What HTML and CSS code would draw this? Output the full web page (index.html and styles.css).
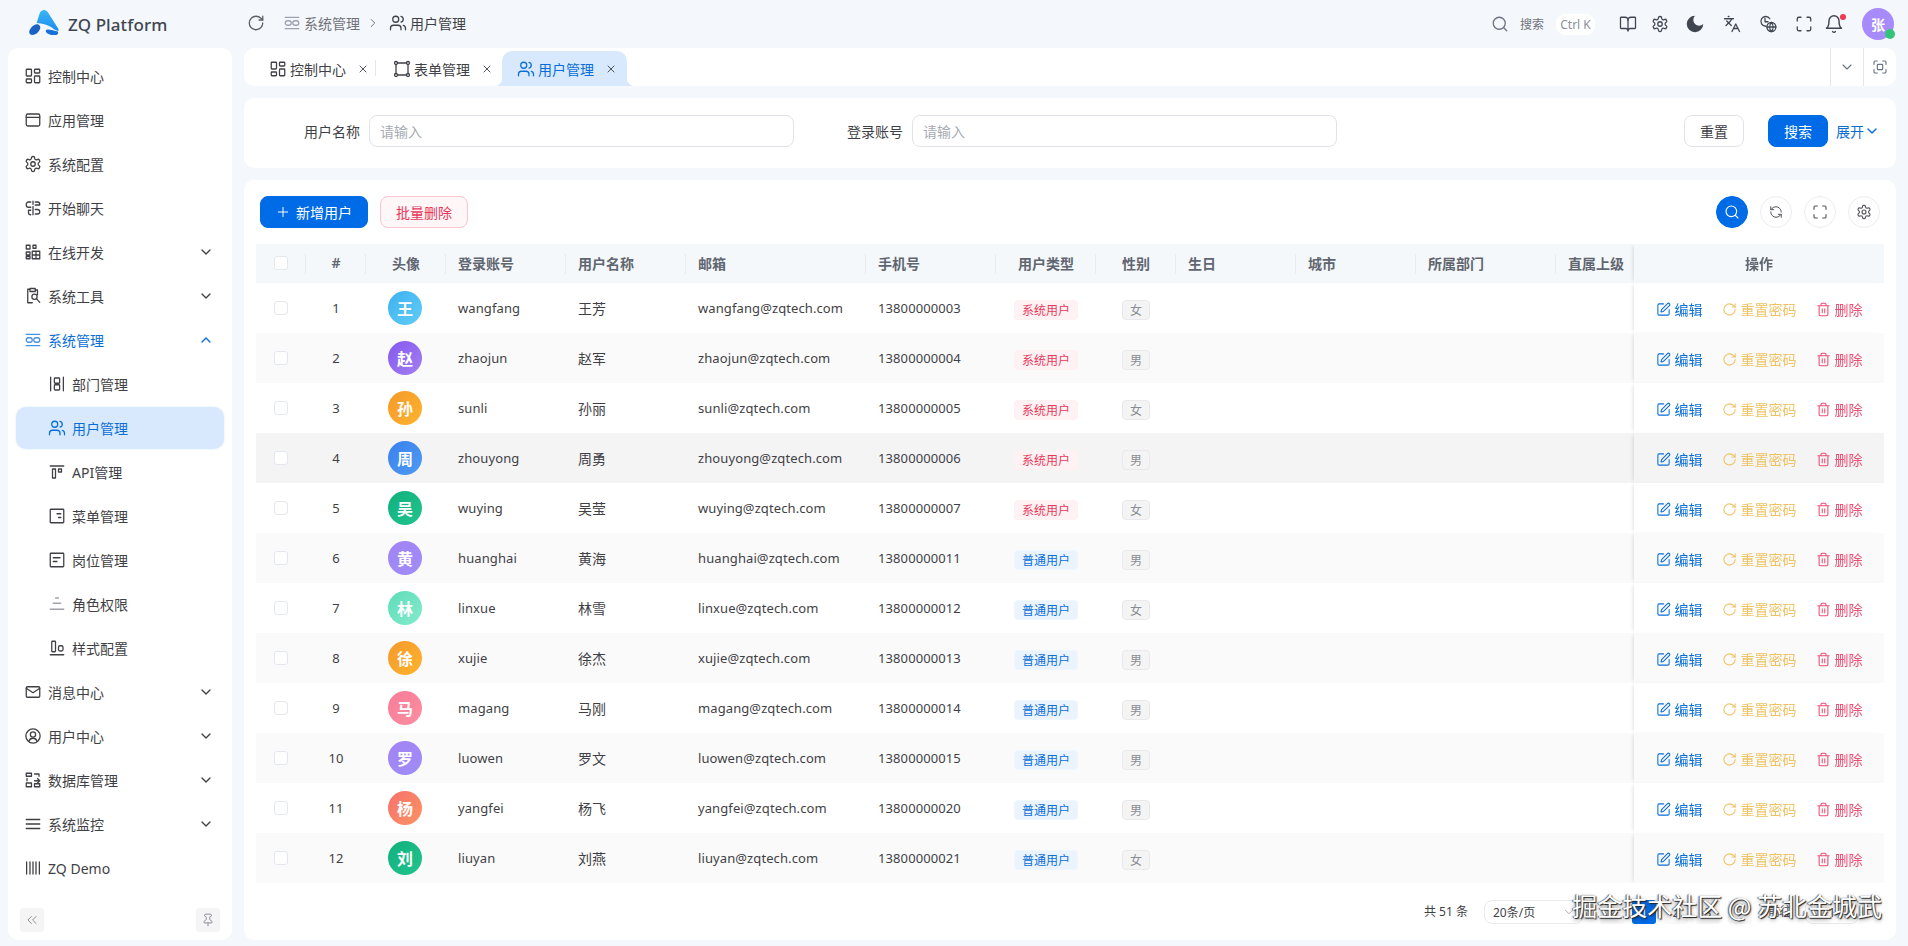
FILE: index.html
```html
<!DOCTYPE html>
<html lang="zh-CN">
<head>
<meta charset="utf-8">
<title>ZQ Platform</title>
<link rel="stylesheet" href="styles.css">
</head>
<body>
<svg class="sprite" xmlns="http://www.w3.org/2000/svg">
<symbol id="i-grid" viewBox="0 0 24 24"><rect x="3" y="3" width="7" height="9" rx="1"/><rect x="14" y="3" width="7" height="5" rx="1"/><rect x="14" y="12" width="7" height="9" rx="1"/><rect x="3" y="16" width="7" height="5" rx="1"/></symbol>
<symbol id="i-app" viewBox="0 0 24 24"><rect x="3" y="4" width="18" height="16" rx="2"/><path d="M3 8.5h18"/></symbol>
<symbol id="i-gear" viewBox="0 0 24 24"><path d="M12.22 2h-.44a2 2 0 0 0-2 2v.18a2 2 0 0 1-1 1.73l-.43.25a2 2 0 0 1-2 0l-.15-.08a2 2 0 0 0-2.73.73l-.22.38a2 2 0 0 0 .73 2.73l.15.1a2 2 0 0 1 1 1.72v.51a2 2 0 0 1-1 1.74l-.15.09a2 2 0 0 0-.73 2.73l.22.38a2 2 0 0 0 2.73.73l.15-.08a2 2 0 0 1 2 0l.43.25a2 2 0 0 1 1 1.73V20a2 2 0 0 0 2 2h.44a2 2 0 0 0 2-2v-.18a2 2 0 0 1 1-1.73l.43-.25a2 2 0 0 1 2 0l.15.08a2 2 0 0 0 2.73-.73l.22-.39a2 2 0 0 0-.73-2.73l-.15-.08a2 2 0 0 1-1-1.74v-.5a2 2 0 0 1 1-1.74l.15-.09a2 2 0 0 0 .73-2.73l-.22-.38a2 2 0 0 0-2.73-.73l-.15.08a2 2 0 0 1-2 0l-.43-.25a2 2 0 0 1-1-1.73V4a2 2 0 0 0-2-2z"/><circle cx="12" cy="12" r="3"/></symbol>
<symbol id="i-chat" viewBox="0 0 24 24"><path d="M12 3v4M12 10v11M9 4H6a3 3 0 0 0-3 3v1a3 3 0 0 0 3 3h3M9 15H6v3a3 3 0 0 0 3 3M15 4h3a3 3 0 0 1 3 3v1h-6M15 14h3a3 3 0 0 1 3 3 3 3 0 0 1-3 3h-3"/></symbol>
<symbol id="i-dev" viewBox="0 0 24 24"><path d="M3 3h5v5H3zM12 3h4v4h-4zM3 12h5v4H3zM3 18h5v3H3zM11 11h10v10H11zM16 11v10M11 16h10"/></symbol>
<symbol id="i-tool" viewBox="0 0 24 24"><path d="M8 3H5v18h6M8 2h7v4H8zM15 4h3v6"/><circle cx="14" cy="13" r="3.5"/><path d="M16.5 15.5 21 20.5"/></symbol>
<symbol id="i-sys" viewBox="0 0 24 24"><path d="M3 4.5h18M3 19.5h18"/><rect x="3" y="9" width="8" height="6" rx="3"/><rect x="13" y="9" width="8" height="6" rx="3"/></symbol>
<symbol id="i-dept" viewBox="0 0 24 24"><path d="M3.5 3v18M20.500 3v18"/><rect x="8.500" y="4" width="7" height="7" rx="1"/><rect x="8.500" y="13" width="7" height="7" rx="1"/></symbol>
<symbol id="i-users" viewBox="0 0 24 24"><path d="M16 21v-2a4 4 0 0 0-4-4H6a4 4 0 0 0-4 4v2"/><circle cx="9" cy="7" r="4"/><path d="M22 21v-2a4 4 0 0 0-3-3.870"/><path d="M16 3.130a4 4 0 0 1 0 7.750"/></symbol>
<symbol id="i-api" viewBox="0 0 24 24"><path d="M3 4h18"/><rect x="6" y="8" width="4" height="12"/><rect x="14" y="8" width="4" height="4"/></symbol>
<symbol id="i-menu" viewBox="0 0 24 24"><rect x="3" y="3" width="18" height="18" rx="1"/><path d="M12 9h5M14 14h3"/></symbol>
<symbol id="i-post" viewBox="0 0 24 24"><rect x="3" y="3" width="18" height="18" rx="1"/><path d="M7 9h9M7 14h5"/></symbol>
<symbol id="i-role" viewBox="0 0 24 24"><path d="M10 4h4M7 11h10M3 19h18"/></symbol>
<symbol id="i-style" viewBox="0 0 24 24"><path d="M3 21h18"/><rect x="5" y="3" width="5" height="14" rx="1"/><rect x="14" y="9" width="6" height="7" rx="2"/></symbol>
<symbol id="i-mail" viewBox="0 0 24 24"><rect x="3" y="5" width="18" height="14" rx="1.500"/><path d="m3 7 9 6 9-6"/></symbol>
<symbol id="i-ucirc" viewBox="0 0 24 24"><circle cx="12" cy="12" r="9.500"/><circle cx="12" cy="10" r="3.500"/><path d="M6.500 19c1-3 3-4 5.500-4s4.500 1 5.500 4"/></symbol>
<symbol id="i-db" viewBox="0 0 24 24"><path d="M3 3h7v4H3zM4 10v3M3 16h7v5H3zM14 4h6M20 4v3M14 13h7M18 10l3 3-3 3M14 17h7v4h-7z"/></symbol>
<symbol id="i-list" viewBox="0 0 24 24"><path d="M3 6h18M3 12h18M3 18h18"/></symbol>
<symbol id="i-bars" viewBox="0 0 24 24"><path d="M3.500 4v16M8 4v16M12 4v16M16 4v16M20.500 4v16"/></symbol>
<symbol id="i-down" viewBox="0 0 24 24"><path d="m6 9 6 6 6-6"/></symbol>
<symbol id="i-up" viewBox="0 0 24 24"><path d="m6 15 6-6 6 6"/></symbol>
<symbol id="i-right" viewBox="0 0 24 24"><path d="m9 6 6 6-6 6"/></symbol>
<symbol id="i-left" viewBox="0 0 24 24"><path d="m15 6-6 6 6 6"/></symbol>
<symbol id="i-dleft" viewBox="0 0 24 24"><path d="m11 6-6 6 6 6M19 6l-6 6 6 6"/></symbol>
<symbol id="i-pin" viewBox="0 0 24 24"><path d="M12 17v5"/><path d="M9 10.760a2 2 0 0 1-1.110 1.790l-1.780.9A2 2 0 0 0 5 15.240V16a1 1 0 0 0 1 1h12a1 1 0 0 0 1-1v-.76a2 2 0 0 0-1.110-1.790l-1.780-.9A2 2 0 0 1 15 10.760V7a1 1 0 0 1 1-1 2 2 0 0 0 0-4H8a2 2 0 0 0 0 4 1 1 0 0 1 1 1z"/></symbol>
<symbol id="i-rcw" viewBox="0 0 24 24"><path d="M21 12a9 9 0 1 1-9-9c2.520 0 4.930 1 6.740 2.740L21 8"/><path d="M21 3v5h-5"/></symbol>
<symbol id="i-form" viewBox="0 0 24 24"><path d="M6 4h12M6 20h12M4 6v12M20 6v12"/><circle cx="4" cy="4" r="2"/><circle cx="20" cy="4" r="2"/><circle cx="4" cy="20" r="2"/><circle cx="20" cy="20" r="2"/></symbol>
<symbol id="i-x" viewBox="0 0 24 24"><path d="M18 6 6 18M6 6l12 12"/></symbol>
<symbol id="i-plus" viewBox="0 0 24 24"><path d="M12 4v16M4 12h16"/></symbol>
<symbol id="i-search" viewBox="0 0 24 24"><circle cx="11" cy="11" r="8"/><path d="m21 21-4.300-4.300"/></symbol>
<symbol id="i-book" viewBox="0 0 24 24"><path d="M12 7v14"/><path d="M3 18a1 1 0 0 1-1-1V4a1 1 0 0 1 1-1h5a4 4 0 0 1 4 4 4 4 0 0 1 4-4h5a1 1 0 0 1 1 1v13a1 1 0 0 1-1 1h-6a3 3 0 0 0-3 3 3 3 0 0 0-3-3z"/></symbol>
<symbol id="i-lang" viewBox="0 0 24 24"><path d="m5 8 6 6M4 14l6-6 2-3M2 5h12M7 2h1M22 22l-5-10-5 10M14 18h6"/></symbol>
<symbol id="i-clockglobe" viewBox="0 0 24 24"><path d="M9 15a6.500 6.500 0 1 1 5.500-10M8 4.500V9h4"/><circle cx="16.500" cy="16" r="6"/><path d="M10.500 16h12M16.500 10c-3 3.500-3 8.500 0 12M16.500 10c3 3.500 3 8.500 0 12"/></symbol>
<symbol id="i-full" viewBox="0 0 24 24"><path d="M3 8V5a2 2 0 0 1 2-2h3M16 3h3a2 2 0 0 1 2 2v3M21 16v3a2 2 0 0 1-2 2h-3M8 21H5a2 2 0 0 1-2-2v-3"/></symbol>
<symbol id="i-bell" viewBox="0 0 24 24"><path d="M6 8a6 6 0 0 1 12 0c0 7 3 9 3 9H3s3-2 3-9"/><path d="M10.300 21a1.940 1.940 0 0 0 3.400 0"/></symbol>
<symbol id="i-scan" viewBox="0 0 24 24"><path d="M3 8V5a2 2 0 0 1 2-2h3M16 3h3a2 2 0 0 1 2 2v3M21 16v3a2 2 0 0 1-2 2h-3M8 21H5a2 2 0 0 1-2-2v-3"/><rect x="8" y="8" width="8" height="8" rx="1"/></symbol>
<symbol id="i-rccw" viewBox="0 0 24 24"><path d="M21 12a9 9 0 0 0-9-9 9.750 9.750 0 0 0-6.740 2.740L3 8"/><path d="M3 3v5h5"/><path d="M3 12a9 9 0 0 0 9 9 9.750 9.750 0 0 0 6.740-2.740L21 16"/><path d="M16 16h5v5"/></symbol>
<symbol id="i-edit" viewBox="0 0 24 24"><path d="M12 3H5a2 2 0 0 0-2 2v14a2 2 0 0 0 2 2h14a2 2 0 0 0 2-2v-7"/><path d="M18.375 2.625a1 1 0 0 1 3 3l-9.013 9.014a2 2 0 0 1-.853.505l-2.873.84a.5.5 0 0 1-.62-.62l.84-2.873a2 2 0 0 1 .506-.852z"/></symbol>
<symbol id="i-trash" viewBox="0 0 24 24"><path d="M3 6h18M19 6v14c0 1-1 2-2 2H7c-1 0-2-1-2-2V6M8 6V4c0-1 1-2 2-2h4c1 0 2 1 2 2v2M10 11v6M14 11v6"/></symbol>
</svg>

<div class="app">
  <header class="topbar">
    <div class="brand">
      <svg class="logo" viewBox="0 0 30 25" aria-hidden="true">
        <defs><linearGradient id="lg" x1="0" y1="0" x2="0" y2="1"><stop offset="0" stop-color="#3ab6f6"/><stop offset="1" stop-color="#1b8df0"/></linearGradient></defs>
        <path fill="url(#lg)" d="M15 0c1.800 0 3 1 4 2.600l10 15.700c.6 1 .8 2 .4 2.700-3.500-.4-5.600-2.800-8.300-4.400-3.500-2-7.500-3-13.500-3.500L11 2.600C12 1 13.200 0 15 0z"/>
        <path fill="#1a63c4" d="M1.600 18.400c1.800-2.800 5.600-5 7.600-4 2.300 1.200 2.800 3.500 1.200 5.900-1.800 2.800-4.100 4.700-6.900 4.700-3 0-4.600-2.800-1.900-6.600z"/>
        <path fill="#1773db" d="M17.500 19.800c2.200-.8 6 .6 10.500 1.500 1.800.4 1.500 3.200-.8 3.700-3 .5-5.500.2-7.600-.9-2.100-1.200-4-3.300-2.100-4.300z"/>
      </svg>
      <span class="brand-name">ZQ Platform</span>
    </div>
    <div class="crumbs">
      <svg class="ic refresh"><use href="#i-rcw"/></svg>
      <span class="crumb muted"><svg class="ic"><use href="#i-sys"/></svg>系统管理</span>
      <svg class="ic crumb-sep"><use href="#i-right"/></svg>
      <span class="crumb"><svg class="ic"><use href="#i-users"/></svg>用户管理</span>
    </div>
    <div class="tools">
      <div class="quick">
        <svg class="ic"><use href="#i-search"/></svg>
        <span class="quick-text">搜索</span>
        <span class="kbd">Ctrl K</span>
      </div>
      <span class="tool w32"><svg class="ic"><use href="#i-book"/></svg></span>
      <span class="tool w32"><svg class="ic"><use href="#i-gear"/></svg></span>
      <span class="tool w38"><svg class="moon" viewBox="0 0 24 24"><path d="M12 3a6 6 0 0 0 9 9 9 9 0 1 1-9-9Z"/></svg></span>
      <span class="tool w36"><svg class="ic"><use href="#i-lang"/></svg></span>
      <span class="tool w36"><svg class="ic"><use href="#i-clockglobe"/></svg></span>
      <span class="tool w36"><svg class="ic"><use href="#i-full"/></svg></span>
      <span class="tool w24 bell"><svg class="ic"><use href="#i-bell"/></svg><i class="bell-dot"></i></span>
      <span class="me">张<i class="me-dot"></i></span>
    </div>
  </header>

  <div class="body">
    <aside class="side">
      <nav class="nav">
        <a class="item"><svg class="ic"><use href="#i-grid"/></svg><span>控制中心</span></a>
        <a class="item"><svg class="ic"><use href="#i-app"/></svg><span>应用管理</span></a>
        <a class="item"><svg class="ic"><use href="#i-gear"/></svg><span>系统配置</span></a>
        <a class="item"><svg class="ic"><use href="#i-chat"/></svg><span>开始聊天</span></a>
        <a class="item"><svg class="ic"><use href="#i-dev"/></svg><span>在线开发</span><svg class="ic chev"><use href="#i-down"/></svg></a>
        <a class="item"><svg class="ic"><use href="#i-tool"/></svg><span>系统工具</span><svg class="ic chev"><use href="#i-down"/></svg></a>
        <a class="item open"><svg class="ic"><use href="#i-sys"/></svg><span>系统管理</span><svg class="ic chev"><use href="#i-up"/></svg></a>
        <a class="item sub"><svg class="ic"><use href="#i-dept"/></svg><span>部门管理</span></a>
        <a class="item sub active"><svg class="ic"><use href="#i-users"/></svg><span>用户管理</span></a>
        <a class="item sub"><svg class="ic"><use href="#i-api"/></svg><span>API管理</span></a>
        <a class="item sub"><svg class="ic"><use href="#i-menu"/></svg><span>菜单管理</span></a>
        <a class="item sub"><svg class="ic"><use href="#i-post"/></svg><span>岗位管理</span></a>
        <a class="item sub"><svg class="ic faint"><use href="#i-role"/></svg><span>角色权限</span></a>
        <a class="item sub"><svg class="ic"><use href="#i-style"/></svg><span>样式配置</span></a>
        <a class="item"><svg class="ic"><use href="#i-mail"/></svg><span>消息中心</span><svg class="ic chev"><use href="#i-down"/></svg></a>
        <a class="item"><svg class="ic"><use href="#i-ucirc"/></svg><span>用户中心</span><svg class="ic chev"><use href="#i-down"/></svg></a>
        <a class="item"><svg class="ic"><use href="#i-db"/></svg><span>数据库管理</span><svg class="ic chev"><use href="#i-down"/></svg></a>
        <a class="item"><svg class="ic"><use href="#i-list"/></svg><span>系统监控</span><svg class="ic chev"><use href="#i-down"/></svg></a>
        <a class="item"><svg class="ic"><use href="#i-bars"/></svg><span>ZQ Demo</span></a>
      </nav>
      <div class="side-foot">
        <span class="foot-btn"><svg class="ic"><use href="#i-dleft"/></svg></span>
        <span class="foot-btn"><svg class="ic"><use href="#i-pin"/></svg></span>
      </div>
    </aside>

    <main class="main">
      <div class="tabs">
        <div class="tab-list">
          <a class="tab sep"><svg class="ic"><use href="#i-grid"/></svg><span>控制中心</span><svg class="ic close"><use href="#i-x"/></svg></a>
          <a class="tab"><svg class="ic"><use href="#i-form"/></svg><span>表单管理</span><svg class="ic close"><use href="#i-x"/></svg></a>
          <a class="tab current"><svg class="ic"><use href="#i-users"/></svg><span>用户管理</span><svg class="ic close"><use href="#i-x"/></svg></a>
        </div>
        <span class="tab-tool"><svg class="ic"><use href="#i-down"/></svg></span>
        <span class="tab-tool"><svg class="ic"><use href="#i-scan"/></svg></span>
      </div>

      <section class="card filter">
        <label class="field"><span class="field-label">用户名称</span><input class="input" placeholder="请输入"></label>
        <label class="field"><span class="field-label">登录账号</span><input class="input" placeholder="请输入"></label>
        <div class="filter-actions">
          <button class="btn plain">重置</button>
          <button class="btn primary wide">搜索</button>
          <a class="expand">展开<svg class="ic"><use href="#i-down"/></svg></a>
        </div>
      </section>

      <section class="card grid-card">
        <div class="toolbar">
          <button class="btn primary add"><svg class="ic"><use href="#i-plus"/></svg>新增用户</button>
          <button class="btn danger">批量删除</button>
          <div class="round-tools">
            <span class="round on"><svg class="ic"><use href="#i-search"/></svg></span>
            <span class="round"><svg class="ic small"><use href="#i-rccw"/></svg></span>
            <span class="round"><svg class="ic"><use href="#i-full"/></svg></span>
            <span class="round"><svg class="ic"><use href="#i-gear"/></svg></span>
          </div>
        </div>

        <div class="table-wrap">
          <table class="table">
            <colgroup>
              <col class="c50"><col class="c60"><col class="c80"><col class="c120"><col class="c120"><col class="c180"><col class="c130"><col class="c100"><col class="c80"><col class="c120"><col class="c120"><col class="c140"><col class="c120"><col class="c250">
            </colgroup>
            <thead>
              <tr>
                <th class="mid"><i class="check"></i></th><th class="mid">#</th><th class="mid">头像</th><th>登录账号</th><th>用户名称</th><th>邮箱</th><th>手机号</th><th class="mid">用户类型</th><th class="mid">性别</th><th>生日</th><th>城市</th><th>所属部门</th><th>直属上级</th><th class="mid op">操作</th>
              </tr>
            </thead>
            <tbody>
              <tr><td class="mid"><i class="check"></i></td><td class="mid">1</td><td class="mid"><span class="ava a-sky">王</span></td><td>wangfang</td><td>王芳</td><td>wangfang@zqtech.com</td><td>13800000003</td><td class="mid"><span class="tag sys">系统用户</span></td><td class="mid"><span class="tag sex">女</span></td><td></td><td></td><td></td><td></td><td class="op"><div class="acts"><a class="act edit"><svg class="ic"><use href="#i-edit"/></svg>编辑</a><a class="act reset"><svg class="ic"><use href="#i-rcw"/></svg>重置密码</a><a class="act del"><svg class="ic"><use href="#i-trash"/></svg>删除</a></div></td></tr>
              <tr><td class="mid"><i class="check"></i></td><td class="mid">2</td><td class="mid"><span class="ava a-violet">赵</span></td><td>zhaojun</td><td>赵军</td><td>zhaojun@zqtech.com</td><td>13800000004</td><td class="mid"><span class="tag sys">系统用户</span></td><td class="mid"><span class="tag sex">男</span></td><td></td><td></td><td></td><td></td><td class="op"><div class="acts"><a class="act edit"><svg class="ic"><use href="#i-edit"/></svg>编辑</a><a class="act reset"><svg class="ic"><use href="#i-rcw"/></svg>重置密码</a><a class="act del"><svg class="ic"><use href="#i-trash"/></svg>删除</a></div></td></tr>
              <tr><td class="mid"><i class="check"></i></td><td class="mid">3</td><td class="mid"><span class="ava a-amber">孙</span></td><td>sunli</td><td>孙丽</td><td>sunli@zqtech.com</td><td>13800000005</td><td class="mid"><span class="tag sys">系统用户</span></td><td class="mid"><span class="tag sex">女</span></td><td></td><td></td><td></td><td></td><td class="op"><div class="acts"><a class="act edit"><svg class="ic"><use href="#i-edit"/></svg>编辑</a><a class="act reset"><svg class="ic"><use href="#i-rcw"/></svg>重置密码</a><a class="act del"><svg class="ic"><use href="#i-trash"/></svg>删除</a></div></td></tr>
              <tr class="hover"><td class="mid"><i class="check"></i></td><td class="mid">4</td><td class="mid"><span class="ava a-blue">周</span></td><td>zhouyong</td><td>周勇</td><td>zhouyong@zqtech.com</td><td>13800000006</td><td class="mid"><span class="tag sys">系统用户</span></td><td class="mid"><span class="tag sex">男</span></td><td></td><td></td><td></td><td></td><td class="op"><div class="acts"><a class="act edit"><svg class="ic"><use href="#i-edit"/></svg>编辑</a><a class="act reset"><svg class="ic"><use href="#i-rcw"/></svg>重置密码</a><a class="act del"><svg class="ic"><use href="#i-trash"/></svg>删除</a></div></td></tr>
              <tr><td class="mid"><i class="check"></i></td><td class="mid">5</td><td class="mid"><span class="ava a-green">吴</span></td><td>wuying</td><td>吴莹</td><td>wuying@zqtech.com</td><td>13800000007</td><td class="mid"><span class="tag sys">系统用户</span></td><td class="mid"><span class="tag sex">女</span></td><td></td><td></td><td></td><td></td><td class="op"><div class="acts"><a class="act edit"><svg class="ic"><use href="#i-edit"/></svg>编辑</a><a class="act reset"><svg class="ic"><use href="#i-rcw"/></svg>重置密码</a><a class="act del"><svg class="ic"><use href="#i-trash"/></svg>删除</a></div></td></tr>
              <tr><td class="mid"><i class="check"></i></td><td class="mid">6</td><td class="mid"><span class="ava a-lilac">黄</span></td><td>huanghai</td><td>黄海</td><td>huanghai@zqtech.com</td><td>13800000011</td><td class="mid"><span class="tag normal">普通用户</span></td><td class="mid"><span class="tag sex">男</span></td><td></td><td></td><td></td><td></td><td class="op"><div class="acts"><a class="act edit"><svg class="ic"><use href="#i-edit"/></svg>编辑</a><a class="act reset"><svg class="ic"><use href="#i-rcw"/></svg>重置密码</a><a class="act del"><svg class="ic"><use href="#i-trash"/></svg>删除</a></div></td></tr>
              <tr><td class="mid"><i class="check"></i></td><td class="mid">7</td><td class="mid"><span class="ava a-mint">林</span></td><td>linxue</td><td>林雪</td><td>linxue@zqtech.com</td><td>13800000012</td><td class="mid"><span class="tag normal">普通用户</span></td><td class="mid"><span class="tag sex">女</span></td><td></td><td></td><td></td><td></td><td class="op"><div class="acts"><a class="act edit"><svg class="ic"><use href="#i-edit"/></svg>编辑</a><a class="act reset"><svg class="ic"><use href="#i-rcw"/></svg>重置密码</a><a class="act del"><svg class="ic"><use href="#i-trash"/></svg>删除</a></div></td></tr>
              <tr><td class="mid"><i class="check"></i></td><td class="mid">8</td><td class="mid"><span class="ava a-amber">徐</span></td><td>xujie</td><td>徐杰</td><td>xujie@zqtech.com</td><td>13800000013</td><td class="mid"><span class="tag normal">普通用户</span></td><td class="mid"><span class="tag sex">男</span></td><td></td><td></td><td></td><td></td><td class="op"><div class="acts"><a class="act edit"><svg class="ic"><use href="#i-edit"/></svg>编辑</a><a class="act reset"><svg class="ic"><use href="#i-rcw"/></svg>重置密码</a><a class="act del"><svg class="ic"><use href="#i-trash"/></svg>删除</a></div></td></tr>
              <tr><td class="mid"><i class="check"></i></td><td class="mid">9</td><td class="mid"><span class="ava a-pink">马</span></td><td>magang</td><td>马刚</td><td>magang@zqtech.com</td><td>13800000014</td><td class="mid"><span class="tag normal">普通用户</span></td><td class="mid"><span class="tag sex">男</span></td><td></td><td></td><td></td><td></td><td class="op"><div class="acts"><a class="act edit"><svg class="ic"><use href="#i-edit"/></svg>编辑</a><a class="act reset"><svg class="ic"><use href="#i-rcw"/></svg>重置密码</a><a class="act del"><svg class="ic"><use href="#i-trash"/></svg>删除</a></div></td></tr>
              <tr><td class="mid"><i class="check"></i></td><td class="mid">10</td><td class="mid"><span class="ava a-lilac">罗</span></td><td>luowen</td><td>罗文</td><td>luowen@zqtech.com</td><td>13800000015</td><td class="mid"><span class="tag normal">普通用户</span></td><td class="mid"><span class="tag sex">男</span></td><td></td><td></td><td></td><td></td><td class="op"><div class="acts"><a class="act edit"><svg class="ic"><use href="#i-edit"/></svg>编辑</a><a class="act reset"><svg class="ic"><use href="#i-rcw"/></svg>重置密码</a><a class="act del"><svg class="ic"><use href="#i-trash"/></svg>删除</a></div></td></tr>
              <tr><td class="mid"><i class="check"></i></td><td class="mid">11</td><td class="mid"><span class="ava a-coral">杨</span></td><td>yangfei</td><td>杨飞</td><td>yangfei@zqtech.com</td><td>13800000020</td><td class="mid"><span class="tag normal">普通用户</span></td><td class="mid"><span class="tag sex">男</span></td><td></td><td></td><td></td><td></td><td class="op"><div class="acts"><a class="act edit"><svg class="ic"><use href="#i-edit"/></svg>编辑</a><a class="act reset"><svg class="ic"><use href="#i-rcw"/></svg>重置密码</a><a class="act del"><svg class="ic"><use href="#i-trash"/></svg>删除</a></div></td></tr>
              <tr><td class="mid"><i class="check"></i></td><td class="mid">12</td><td class="mid"><span class="ava a-green">刘</span></td><td>liuyan</td><td>刘燕</td><td>liuyan@zqtech.com</td><td>13800000021</td><td class="mid"><span class="tag normal">普通用户</span></td><td class="mid"><span class="tag sex">女</span></td><td></td><td></td><td></td><td></td><td class="op"><div class="acts"><a class="act edit"><svg class="ic"><use href="#i-edit"/></svg>编辑</a><a class="act reset"><svg class="ic"><use href="#i-rcw"/></svg>重置密码</a><a class="act del"><svg class="ic"><use href="#i-trash"/></svg>删除</a></div></td></tr>
            </tbody>
          </table>
        </div>

        <div class="pager">
          <span class="total">共 51 条</span>
          <span class="size">20条/页<svg class="ic"><use href="#i-down"/></svg></span>
          <span class="page"><svg class="ic"><use href="#i-left"/></svg></span>
          <span class="page on">1</span>
          <span class="page">2</span>
          <span class="page">3</span>
          <span class="page"><svg class="ic"><use href="#i-right"/></svg></span>
          <span class="goto">前往</span>
          <span class="goto-input">1</span>
        </div>
      </section>
    </main>
  </div>
  <div class="watermark">掘金技术社区 @ 苏北金城武</div>
</div>
</body>
</html>
```

FILE: styles.css
```css
* { box-sizing: border-box; }
html, body { margin: 0; height: 100%; }
body {
  font-family: "Noto Sans", "Noto Sans CJK SC", sans-serif;
  font-size: 14px;
  color: #3f3f46;
  background: #f4f7fb;
  overflow: hidden;
}
a { color: inherit; text-decoration: none; }
.sprite { display: none; }
.ic {
  width: 18px; height: 18px; flex: none;
  fill: none; stroke: currentColor; stroke-width: 1.7;
  stroke-linecap: round; stroke-linejoin: round;
}
.app { position: relative; width: 1908px; height: 946px; display: flex; flex-direction: column; }

/* top bar */
.topbar { height: 48px; flex: none; display: flex; align-items: center; }
.brand { width: 247px; padding-left: 29px; display: flex; align-items: center; gap: 9px; flex: none; }
.logo { width: 30px; height: 25px; margin-top: -3px; flex: none; }
.brand-name { font-size: 17px; font-weight: 500; color: #3f4650; letter-spacing: .1px; }
.crumbs { display: flex; align-items: center; color: #3f3f46; margin-top: -2px; }
.refresh { color: #5b6068; margin-right: 18px; }
.crumb { display: inline-flex; align-items: center; gap: 3px; }
.crumb.muted { color: #71717a; }
.crumb.muted .ic { color: #9ca3af; }
.crumb-sep { width: 14px; height: 14px; margin: 0 9px 0 6px; color: #71717a; }
.tools { margin-left: auto; display: flex; align-items: center; padding-right: 14px; color: #3f4650; }
.quick { display: flex; align-items: center; margin-right: 17px; color: #71717a; }
.quick .ic { color: #6b7280; }
.quick-text { font-size: 12px; margin-left: 11px; }
.kbd { margin-left: 12px; width: 39px; height: 21px; border-radius: 9px; background: #fff; font-size: 12px; color: #8a8f98; display: flex; align-items: center; justify-content: center; white-space: nowrap; }
.tool { position: relative; display: flex; justify-content: center; align-items: center; height: 32px; }
.w32 { width: 32px; }
.w38 { width: 38px; }
.w36 { width: 36px; }
.w24 { width: 24px; }
.moon { width: 22px; height: 22px; fill: #3f4650; }
.bell .ic { width: 20px; height: 20px; }
.bell-dot { position: absolute; right: 0; top: 6px; width: 6px; height: 6px; border-radius: 50%; background: #f0384f; }
.me { position: relative; margin-left: 16px; width: 32px; height: 32px; border-radius: 50%; background: #a78bfa; color: #fff; font-weight: 600; display: flex; align-items: center; justify-content: center; }
.me-dot { position: absolute; right: -1px; bottom: 1px; width: 10px; height: 10px; border-radius: 50%; background: #34c479; }

/* layout */
.body { flex: 1; min-height: 0; display: flex; gap: 12px; padding: 0 12px 6px 8px; }

/* sidebar */
.side { width: 224px; flex: none; background: #fff; border-radius: 10px; display: flex; flex-direction: column; padding: 6px 8px 8px; }
.nav { display: flex; flex-direction: column; }
.item { height: 44px; flex: none; display: flex; align-items: center; gap: 6px; padding: 0 10px 0 8px; border-radius: 10px; color: #3f3f46; }
.chev { width: 16px; height: 16px; margin-left: auto; stroke-width: 2; }
.item.open { color: #0a6ed9; }
.item.open .ic:first-child { opacity: .75; }
.sub { padding-left: 32px; }
.sub.active { height: 42px; margin: 1px 0; background: #d9e9fd; color: #0a6ed9; box-shadow: 0 0 3px #e3eefc; }
.faint { color: #a1a1aa; }
.side-foot { margin-top: auto; display: flex; justify-content: space-between; padding: 0 4px; }
.foot-btn { width: 24px; height: 24px; border-radius: 4px; background: #f5f5f6; color: #8a8f98; display: flex; align-items: center; justify-content: center; }
.foot-btn .ic { width: 14px; height: 14px; }

/* main */
.main { flex: 1; min-width: 0; display: flex; flex-direction: column; gap: 12px; }
.tabs { height: 38px; flex: none; background: #fff; border-radius: 10px; display: flex; }
.tab-list { flex: 1; display: flex; align-items: flex-end; padding-left: 10px; }
.tab { position: relative; height: 35px; width: 124px; flex: none; display: flex; align-items: center; padding: 0 9px 0 15px; color: #3f3f46; }
.tab span { margin-left: 3px; }
.tab .close { width: 12px; height: 12px; margin-left: 11px; stroke-width: 2; color: #52525b; }
.tab.sep::after { content: ""; position: absolute; right: 2px; top: 9px; height: 16px; border-right: 1px solid #e5e7eb; }
.tab.current { width: 125px; background: #d9e9fd; color: #0a6ed9; border-radius: 10px 10px 0 0; }
.tab.current::before, .tab.current::after { content: ""; position: absolute; bottom: 0; width: 8px; height: 8px; }
.tab.current::before { left: -8px; background: radial-gradient(circle at 0 0, transparent 8px, #d9e9fd 8.5px); }
.tab.current::after { right: -8px; background: radial-gradient(circle at 100% 0, transparent 8px, #d9e9fd 8.5px); }
.tab-tool { width: 33px; border-left: 1px solid #e5e7eb; display: flex; align-items: center; justify-content: center; color: #6b7280; flex: none; }
.tab-tool .ic { width: 16px; height: 16px; }

.card { background: #fff; border-radius: 10px; }
.filter { height: 70px; flex: none; display: flex; align-items: flex-start; padding: 17px 16px 0 16px; gap: 9px; }
.field { display: flex; align-items: center; gap: 9px; }
.field-label { width: 100px; text-align: right; color: #3f3f46; }
.input { width: 425px; height: 32px; border: 1px solid #e0e3e8; border-radius: 8px; padding: 0 10px; font: inherit; color: #3f3f46; outline: none; background: #fff; }
.input::placeholder { color: #a8abb2; }
.filter-actions { margin-left: auto; display: flex; align-items: center; }
.btn { height: 32px; border-radius: 8px; border: 1px solid transparent; font: inherit; display: inline-flex; align-items: center; justify-content: center; background: #fff; padding: 0; }
.btn.plain { width: 60px; border-color: #e0e3e8; color: #3f3f46; margin-right: 24px; }
.btn.primary { background: #006be6; border-color: #006be6; color: #fff; }
.btn.wide { width: 60px; }
.expand { margin-left: 8px; color: #0a6ed9; display: inline-flex; align-items: center; }
.expand .ic { width: 16px; height: 16px; stroke-width: 2.2; }

.grid-card { flex: 1; min-height: 0; padding: 16px 12px 0; display: flex; flex-direction: column; }
.toolbar { height: 32px; flex: none; display: flex; align-items: center; margin-bottom: 16px; padding-left: 4px; padding-right: 4px; }
.btn.add { width: 108px; gap: 6px; }
.btn.add .ic { width: 14px; height: 14px; }
.btn.danger { width: 88px; margin-left: 12px; border-color: #fbc6d0; background: #fff6f8; color: #e8385a; }
.round-tools { margin-left: auto; display: flex; gap: 12px; }
.round { width: 32px; height: 32px; border-radius: 50%; border: 1px solid #ebedf0; display: flex; align-items: center; justify-content: center; color: #52525b; }
.round .ic { width: 16px; height: 16px; }
.round .ic.small { width: 14px; height: 14px; }
.round.on { background: #006be6; border-color: #006be6; color: #fff; }

/* table */
.table-wrap { overflow: hidden; flex: none; }
.table { table-layout: fixed; border-collapse: separate; border-spacing: 0; width: 1670px; }
.c50 { width: 50px; } .c60 { width: 60px; } .c80 { width: 80px; } .c100 { width: 100px; }
.c120 { width: 120px; } .c130 { width: 130px; } .c140 { width: 140px; } .c180 { width: 180px; } .c250 { width: 250px; }
th { position: relative; height: 39px; background: #f5f8fb; color: #5f6670; font-weight: 600; text-align: left; padding: 0 12px 2px; white-space: nowrap; }
th:not(.op):not(:nth-child(13))::after { content: ""; position: absolute; right: 0; top: 10px; height: 20px; border-right: 1px solid #e8ebf0; }
td { height: 50px; padding: 0 12px; background: #fff; white-space: nowrap; color: #3f3f46; }
td:nth-child(2), td:nth-child(4), td:nth-child(6), td:nth-child(7) { font-size: 13px; letter-spacing: .1px; }
tbody tr:nth-child(even) td { background: #fafafa; }
tbody tr.hover td { background: #f4f4f5; }
.mid { text-align: center; }
.op { position: sticky; right: 0; z-index: 1; box-shadow: -3px 0 4px -2px rgba(0,0,0,.12); }
.check { display: block; width: 14px; height: 14px; margin: 0 auto; border: 1px solid #e4e7ed; border-radius: 3px; background: #fff; }
.ava { width: 34px; height: 34px; margin-left: -2px; border-radius: 50%; color: #fff; font-size: 16px; font-weight: 700; display: inline-flex; align-items: center; justify-content: center; vertical-align: middle; }
.a-sky { background: linear-gradient(135deg, #3db2ef, #62ccf7); }
.a-violet { background: linear-gradient(135deg, #8458f0, #a37ff0); }
.a-amber { background: linear-gradient(135deg, #f5992a, #fdb32e); }
.a-blue { background: linear-gradient(135deg, #3a80f0, #4f9bf2); }
.a-green { background: linear-gradient(135deg, #10b07c, #22c48e); }
.a-lilac { background: linear-gradient(135deg, #a283f5, #9f8df7); }
.a-mint { background: linear-gradient(135deg, #5fdcb8, #84ebcd); }
.a-pink { background: linear-gradient(135deg, #f87c98, #fb8fa0); }
.a-coral { background: linear-gradient(135deg, #f6726c, #fb9363); }
.tag { display: inline-flex; align-items: center; justify-content: center; height: 20px; border-radius: 4px; font-size: 12px; margin-top: 4px; border: 1px solid transparent; vertical-align: middle; }
.sys { width: 64px; background: #fff2f4; border-color: #fff0f2; color: #e8385a; }
.normal { width: 64px; background: #ebf4fd; border-color: #eef6fe; color: #0a6ed9; }
.sex { width: 28px; background: #f4f4f5; border-color: #e9e9eb; color: #8a8d93; }
.acts { display: flex; justify-content: center; gap: 19px; margin-top: 2px; }
.act { display: inline-flex; align-items: center; gap: 4px; }
.act .ic { width: 15px; height: 15px; }
.edit { color: #0a6ed9; }
.reset { color: #efc364; }
.del { color: #ec4d72; }

/* pager */
.pager { flex: 1; display: flex; align-items: flex-start; padding-top: 17px; font-size: 12px; }
.total { margin-left: 1168px; width: 44px; white-space: nowrap; line-height: 24px; }
.size { width: 99px; height: 24px; margin-left: 16px; padding: 0 6px 0 8px; border: 1px solid #e8eaee; border-radius: 8px; display: flex; align-items: center; justify-content: space-between; }
.size .ic { width: 14px; height: 14px; color: #a8abb2; }
.page { width: 24px; height: 24px; margin-left: 8px; border-radius: 3px; background: #f8f8f9; display: flex; align-items: center; justify-content: center; color: #52525b; }
.size + .page { margin-left: 17px; }
.page .ic { width: 13px; height: 13px; }
.page.on { background: #006be6; color: #fff; }
.goto { margin-left: 16px; color: #52525b; line-height: 24px; }
.goto-input { width: 54px; height: 24px; margin-left: 13px; border: 1px solid #e8eaee; border-radius: 8px; display: flex; align-items: center; justify-content: center; }

.watermark {
  position: absolute; right: 26px; top: 889px;
  font-family: "Noto Sans CJK SC", sans-serif;
  font-size: 25px; line-height: 32px; white-space: nowrap;
  color: #fff; text-shadow: 1px 1px 1px #222, -1px 0 1px #555, 0 2px 4px rgba(0,0,0,.4);
}
```
